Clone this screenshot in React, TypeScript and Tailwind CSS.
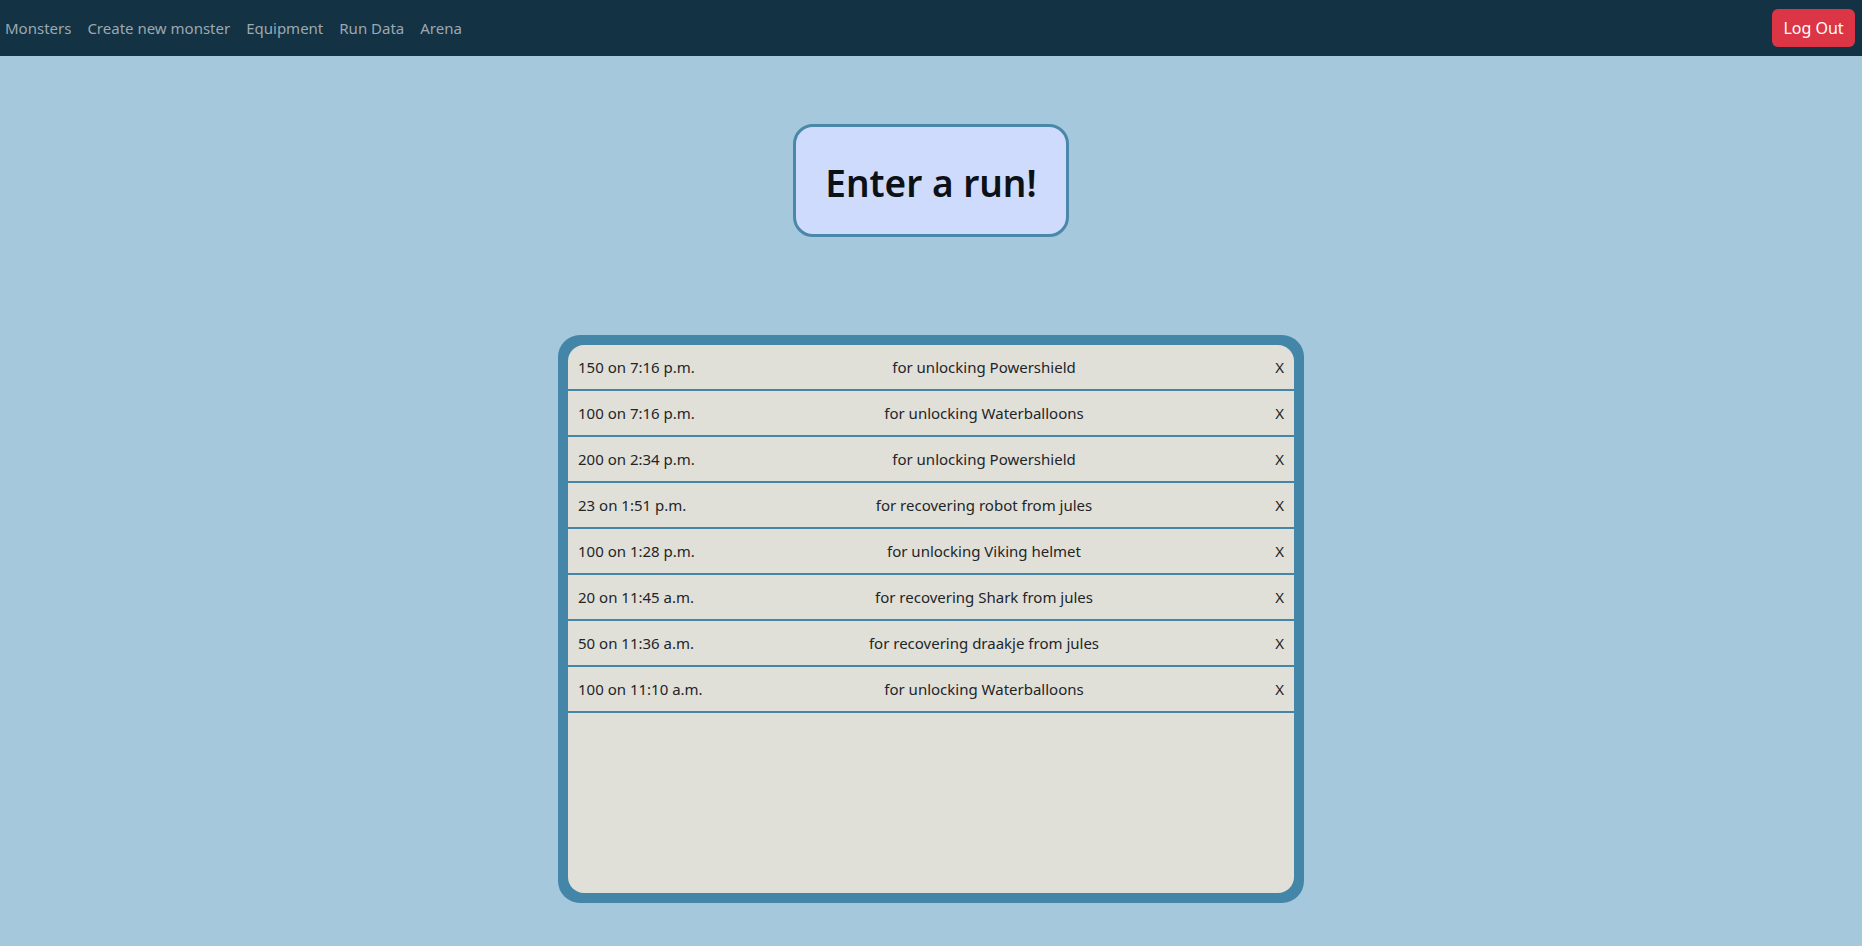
import React from "react";

const rows = [
  ["150 on 7:16 p.m.", "for unlocking Powershield"],
  ["100 on 7:16 p.m.", "for unlocking Waterballoons"],
  ["200 on 2:34 p.m.", "for unlocking Powershield"],
  ["23 on 1:51 p.m.", "for recovering robot from jules"],
  ["100 on 1:28 p.m.", "for unlocking Viking helmet"],
  ["20 on 11:45 a.m.", "for recovering Shark from jules"],
  ["50 on 11:36 a.m.", "for recovering draakje from jules"],
  ["100 on 11:10 a.m.", "for unlocking Waterballoons"],
];

export default function App() {
  return (
    <div
      className="w-full min-h-[946px] bg-[#a6c8dc] text-[#212529] flex flex-col"
      style={{ fontFamily: '"Noto Sans", "Open Sans", sans-serif' }}
    >
      <nav className="h-[56px] bg-[#133244] flex items-center justify-between pl-[5px] pr-[7px]">
        <div className="flex items-center gap-[16px] text-[15px] text-[#9ea8b0]">
          <span>Monsters</span>
          <span>Create new monster</span>
          <span>Equipment</span>
          <span>Run Data</span>
          <span>Arena</span>
        </div>
        <button className="h-[38px] w-[83px] rounded-[6px] bg-[#dc3545] text-white text-[16px] flex items-center justify-center">
          Log Out
        </button>
      </nav>
      <main className="flex flex-col items-center">
        <div className="mt-[68px] w-[276px] h-[113px] rounded-[20px] border-[3px] border-[#4a87a8] bg-[#cfdbfc] flex items-center justify-center pt-[4px]">
          <h1 className="text-[37px] font-semibold text-[#0c1116] leading-none">Enter a run!</h1>
        </div>
        <div className="mt-[98px] w-[746px] h-[568px] rounded-[22px] bg-[#4386a8] p-[10px]">
          <div className="w-full h-full rounded-[16px] bg-[#e1e0d8] overflow-hidden">
            {rows.map(([a, b], i) => (
              <div
                key={i}
                className="h-[46px] border-b-2 border-[#4386a8] grid grid-cols-[140px_1fr_34px] items-center px-[10px] text-[15px]"
              >
                <span>{a}</span>
                <span className="text-center">{b}</span>
                <span className="text-right">X</span>
              </div>
            ))}
          </div>
        </div>
      </main>
    </div>
  );
}
